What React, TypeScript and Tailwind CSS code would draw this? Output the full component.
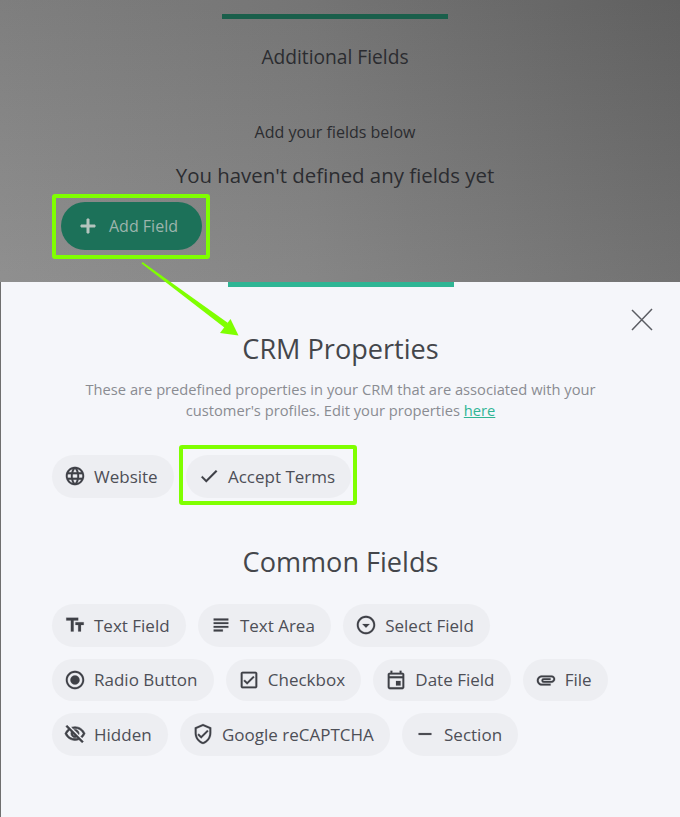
import type { ComponentType } from "react";
import {
  MdAdd,
  MdLanguage,
  MdCheck,
  MdTextFields,
  MdSubject,
  MdOutlineArrowDropDownCircle,
  MdRadioButtonChecked,
  MdOutlineCheckBox,
  MdOutlineEvent,
  MdAttachment,
  MdOutlineVisibilityOff,
  MdOutlineVerifiedUser,
  MdRemove,
} from "react-icons/md";

type Icon = ComponentType<{ className?: string }>;

function Chip({ icon: Icon, label, heavy }: { icon: Icon; label: string; heavy?: boolean }) {
  return (
    <div className="flex h-[42.5px] items-center gap-[8px] rounded-full bg-[#edeef2] pl-[12px] pr-[16.3px] text-[17px] text-[#4d4f57]">
      <Icon
        className={`h-[22px] w-[22px] text-[#3f4147] [&_path[fill=none]]:stroke-0 ${heavy ? "stroke-[0.6]" : "stroke-[0.2]"}`}
      />
      <span>{label}</span>
    </div>
  );
}

export default function App() {
  return (
    <div className="relative h-[817px] w-[680px] overflow-hidden font-['Open_Sans',sans-serif]">
      {/* fondo oscurecido */}
      <div className="h-[282px] bg-[linear-gradient(180deg,rgba(0,0,0,0.06),rgba(255,255,255,0.08)),linear-gradient(90deg,#868686_0%,#7c7c7c_45%,#666666_100%)] pt-[14px]">
        <div className="flex w-[670px] flex-col items-center text-[#2b2c30]">
          <div className="h-[5px] w-[226px] bg-[#1a5f4b]" />
          <h2 className="mt-[25px] text-[19.2px] leading-[26px]">Additional Fields</h2>
          <p className="mt-[51px] text-[16px] leading-[22px]">Add your fields below</p>
          <p className="mt-[18px] text-[20.4px] leading-[28px]">You haven't defined any fields yet</p>
        </div>
        <div className="relative ml-[61px] mt-[13px] w-fit">
          <button className="flex h-[48px] w-[141px] items-center gap-[9px] rounded-full bg-[#1c7159] pl-[15px] text-[16px] text-[#9db5ad]">
            <MdAdd className="h-[24px] w-[24px] stroke-[1] text-[#b4c4be] [&_path[fill=none]]:stroke-0" />
            Add Field
          </button>
          <div className="absolute -bottom-[9px] -left-[9px] -right-[8px] -top-[8px] rounded-[3px] border-[4px] border-[#7fff00]" />
        </div>
      </div>

      {/* panel */}
      <div className="relative h-[535px] border-l border-[#6f6f6f] bg-[#f5f6fa]">
        <div className="mx-auto h-[5px] w-[226px] bg-[#2fb594]" />
        <button className="absolute right-[26px] top-[26px] text-[#5b5d63]">
          <svg width="24" height="24" viewBox="0 0 24 24" fill="none" stroke="currentColor" strokeWidth="1.5">
            <path d="M2 2 L22 22 M22 1 L2 22" />
          </svg>
        </button>
        <div className="flex flex-col items-center">
          <h2 className="mt-[44px] text-[27.1px] leading-[36px] text-[#44464b]">CRM Properties</h2>
          <p className="mt-[12px] w-[540px] text-center text-[14.7px] leading-[21px] text-[#8a8c92]">
            These are predefined properties in your CRM that are associated with your customer's profiles. Edit your
            properties{" "}
            <a href="#" className="text-[#2fb594] underline">
              here
            </a>
          </p>
        </div>
        <div className="ml-[51px] mt-[34px] flex gap-[12px]">
          <Chip icon={MdLanguage} label="Website" />
          <div className="relative">
            <Chip icon={MdCheck} label="Accept Terms" />
            <div className="absolute -bottom-[7px] -left-[7px] -right-[6px] -top-[10px] rounded-[3px] border-[4px] border-[#7fff00]" />
          </div>
        </div>
        <h2 className="mt-[46px] text-center text-[27.1px] leading-[36px] text-[#44464b]">Common Fields</h2>
        <div className="ml-[51px] mt-[24.5px] flex flex-col gap-[12px]">
          <div className="flex gap-[12px]">
            <Chip icon={MdTextFields} label="Text Field" />
            <Chip icon={MdSubject} label="Text Area" />
            <Chip icon={MdOutlineArrowDropDownCircle} label="Select Field" />
          </div>
          <div className="flex gap-[12px]">
            <Chip icon={MdRadioButtonChecked} label="Radio Button" />
            <Chip icon={MdOutlineCheckBox} label="Checkbox" />
            <Chip icon={MdOutlineEvent} label="Date Field" />
            <Chip icon={MdAttachment} label="File" />
          </div>
          <div className="flex gap-[12px]">
            <Chip icon={MdOutlineVisibilityOff} label="Hidden" heavy />
            <Chip icon={MdOutlineVerifiedUser} label="Google reCAPTCHA" />
            <Chip icon={MdRemove} label="Section" />
          </div>
        </div>
      </div>

      {/* flecha de anotación */}
      <svg className="absolute left-0 top-0" width="680" height="817" fill="none">
        <path d="M142.5 262 L228 323 L225 328 L141.5 263.5 Z" fill="#7fff00" />
        <path d="M238.5 335.5 L220 333 L230.5 319 Z" fill="#7fff00" />
      </svg>
    </div>
  );
}
